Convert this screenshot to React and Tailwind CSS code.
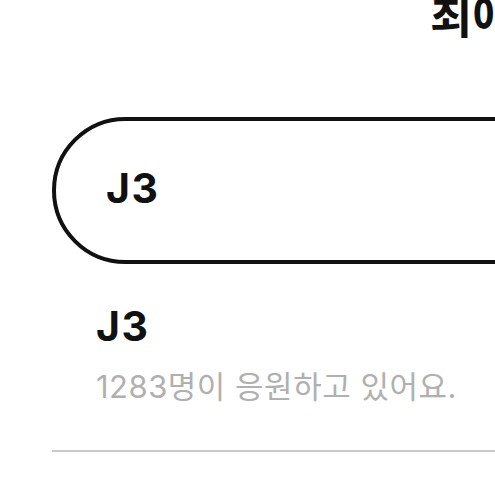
import React from 'react'

const latin = "font-['Inter','Noto_Sans_CJK_KR',sans-serif]";

const App = () => {
    return (
        <div className={`w-[495px] h-[495px] overflow-hidden bg-white text-[#111] ${latin}`}>
            <h1 className="ml-[430px] -mt-[7px] h-[46px] whitespace-nowrap text-[46px] font-bold leading-[46px]">
                최애 아이돌
            </h1>

            <div className="ml-[52px] mt-[78px] flex h-[147px] w-[520px] items-center rounded-l-[74px] border-[4px] border-[#111] pb-[5px] pl-[50px]">
                <span className="text-[41px] font-bold leading-none tracking-[0.04em]">J3</span>
            </div>

            <div className="ml-[96px] mt-[42px]">
                <p className="text-[41px] font-bold leading-none tracking-[0.04em]">J3</p>
                <p className="mt-[24px] whitespace-nowrap text-[31px] leading-none tracking-[0.5px] text-[#b0b0b0]">
                    1283명이 응원하고 있어요.
                </p>
            </div>

            <div className="ml-[52px] mt-[48px] h-[2px] w-[460px] bg-[#c9c9c9]" />
        </div>
    );
};

export default App;
